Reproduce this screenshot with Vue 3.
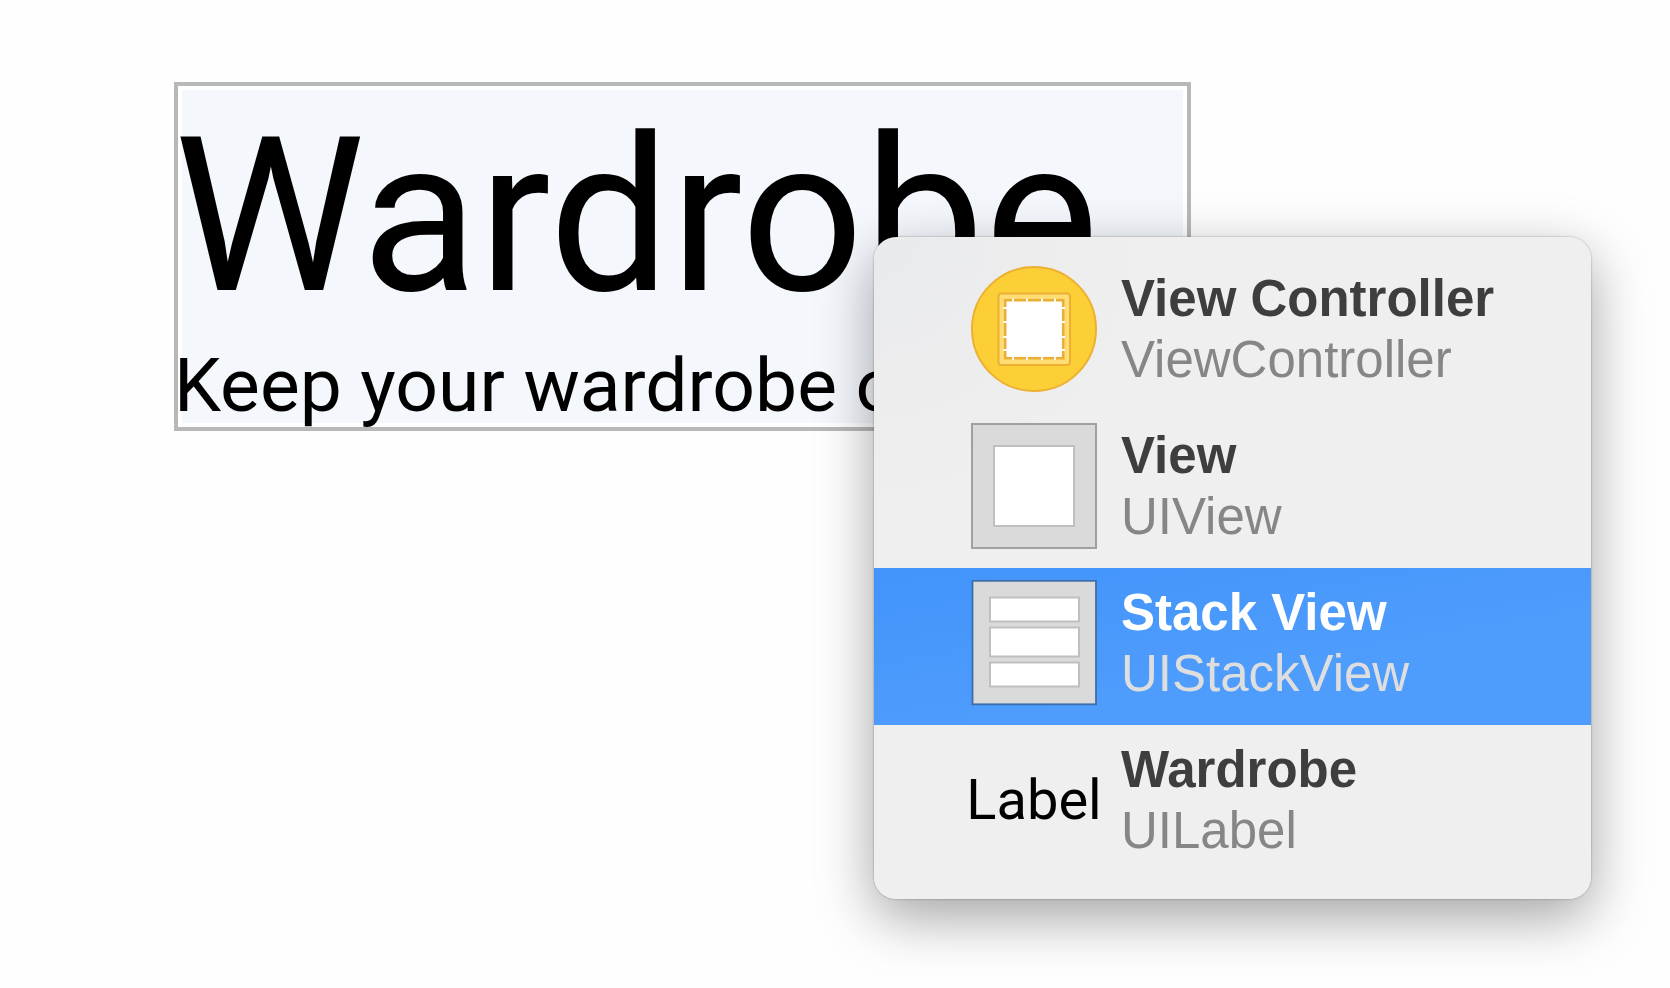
<script setup>
import { ref } from 'vue'

const selected = ref('UIStackView')
const items = [
  { icon: 'controller', title: 'View Controller', type: 'ViewController' },
  { icon: 'view', title: 'View', type: 'UIView' },
  { icon: 'stack', title: 'Stack View', type: 'UIStackView' },
  { icon: 'label', title: 'Wardrobe', type: 'UILabel' },
]
const ticks = [42, 56, 71, 84]
</script>

<template>
  <main class="canvas">
    <section class="stack-view">
      <h1 class="title">Wardrobe</h1>
      <p class="subtitle">Keep your wardrobe o</p>
    </section>

    <div class="menu" role="menu" aria-label="Select view">
      <button
        v-for="item in items"
        :key="item.type"
        type="button"
        role="menuitem"
        class="item"
        :class="{ selected: item.type === selected }"
        @click="selected = item.type"
      >
        <span class="icon">
          <svg v-if="item.icon === 'controller'" viewBox="0 0 126 126" aria-hidden="true">
            <circle cx="63" cy="63" r="62" fill="#fdcf36" stroke="#ecb033" stroke-width="2" />
            <rect x="27.5" y="27.5" width="71.5" height="71.5" rx="3" fill="#fddd74" stroke="#ecb033" stroke-width="2" />
            <rect x="34.2" y="34.2" width="58" height="58" fill="#fff" stroke="#e9af36" stroke-width="2.6" />
            <g stroke="#fff" stroke-width="1.8">
              <path v-for="t in ticks" :key="t" :d="`M${t} 32.4V94M32.4 ${t}H94`" />
            </g>
          </svg>
          <svg v-else-if="item.icon === 'view'" viewBox="0 0 126 126" aria-hidden="true">
            <rect x="1" y="1" width="124" height="124" fill="#dadada" stroke="#a0a0a0" stroke-width="2" />
            <rect x="23" y="23" width="80" height="80" fill="#fff" stroke="#bfbfbf" stroke-width="2" />
          </svg>
          <svg v-else-if="item.icon === 'stack'" viewBox="0 0 126 126" aria-hidden="true">
            <rect x="1.5" y="0.8" width="123.5" height="123.5" fill="#dadada" stroke="#3b6ea8" stroke-width="1.8" />
            <g fill="#fff" stroke="#bfbfbf" stroke-width="2">
              <rect x="19" y="17.5" width="89" height="24" />
              <rect x="19" y="47.5" width="89" height="29" />
              <rect x="19" y="82.5" width="89" height="24" />
            </g>
          </svg>
          <span v-else class="label-icon">Label</span>
        </span>
        <span class="text">
          <span class="name">{{ item.title }}</span>
          <span class="type">{{ item.type }}</span>
        </span>
      </button>
    </div>
  </main>
</template>

<style>
body {
  margin: 0;
  background: #fefefe;
}
</style>

<style scoped>
.canvas {
  position: relative;
  box-sizing: border-box;
  min-height: 100vh;
  padding: 82px 0 0 174px;
  overflow: hidden;
  font-family: Roboto, "Liberation Sans", sans-serif;
  color: #000;
}

.stack-view {
  box-sizing: border-box;
  width: 68%;
  padding-top: 4px;
  border: 4px solid #b8b8b8;
  background: #f4f7fc;
  box-shadow: inset 0 0 0 4px #fff;
  white-space: nowrap;
  text-indent: -4px;
}

.title {
  margin: 0;
  font-size: 215px;
  line-height: 253px;
  font-weight: 400;
}

.subtitle {
  margin: 0;
  font-size: 75px;
  line-height: 84px;
}

.menu {
  position: absolute;
  left: 874px;
  right: 79px;
  top: 237px;
  padding: 17px 0;
  border-radius: 22px;
  background: radial-gradient(circle at 0 0, #e9eaec, #efefef 280px);
  box-shadow: 0 0 2px rgba(0, 0, 0, 0.4), 0 18px 56px rgba(0, 0, 0, 0.36);
}

.item {
  display: flex;
  width: 100%;
  gap: 24px;
  padding: 12px 16px 19px 97px;
  border: 0;
  background: none;
  color: #3e3e3e;
  font-family: "Liberation Sans", sans-serif;
  font-size: 51px;
  line-height: 61px;
  text-align: left;
}

.item.selected {
  background: linear-gradient(170deg, #4294fb, #4e9cfc 60%);
  color: #fff;
}

.icon {
  display: flex;
  flex: none;
  align-items: center;
  justify-content: center;
  width: 126px;
  height: 126px;
}

.icon svg {
  display: block;
  width: 126px;
  height: 126px;
}

.label-icon {
  font-family: Roboto, sans-serif;
  font-size: 56px;
  color: #000;
}

.text {
  display: flex;
  flex-direction: column;
  padding-top: 2px;
}

.name {
  font-weight: 700;
}

.type {
  color: #868686;
}

.selected .type {
  color: #dedede;
}
</style>
